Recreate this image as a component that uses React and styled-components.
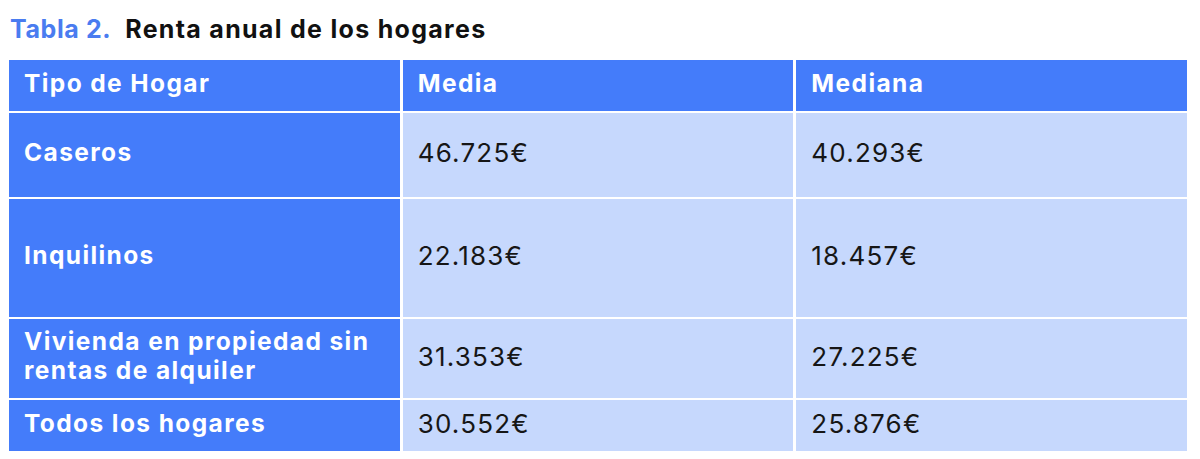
import React from "react";
import styled, { createGlobalStyle } from "styled-components";

const GlobalStyle = createGlobalStyle`
  html, body {
    margin: 0;
    padding: 0;
    background: #ffffff;
  }
  body {
    font-family: "Inter", "Open Sans", sans-serif;
  }
`;

const Page = styled.div`
  width: 1200px;
  height: 459px;
  padding: 13px 13px 0 9px;
  box-sizing: border-box;
`;

const Title = styled.h2`
  margin: 0 0 0 1px;
  height: 47px;
  font-size: 25px;
  font-weight: 700;
  color: #111111;
  letter-spacing: 1.3px;
  line-height: 32px;
  white-space: nowrap;
`;

const TitleNum = styled.span`
  color: #4a7cf0;
  margin-right: 14px;
  letter-spacing: 0.6px;
`;

const Grid = styled.div`
  display: grid;
  grid-template-columns: repeat(3, 1fr);
  column-gap: 3px;
  row-gap: 2px;
  width: 1178px;
`;

const Cell = styled.div`
  height: ${({ $h }) => $h}px;
  box-sizing: border-box;
  display: flex;
  align-items: center;
  padding: 0 12px 5px 15px;
  background: ${({ $light }) => ($light ? "#c6d8fd" : "#447cfa")};
  color: ${({ $light }) => ($light ? "#161616" : "#ffffff")};
  font-size: ${({ $light }) => ($light ? 26 : 24.5)}px;
  font-weight: ${({ $light }) => ($light ? 400 : 700)};
  line-height: 29px;
  letter-spacing: ${({ $light }) => ($light ? "1.2px" : "1.4px")};
`;

const header = ["Tipo de Hogar", "Media", "Mediana"];

const rows = [
  { label: "Caseros", media: "46.725€", mediana: "40.293€", h: 84 },
  { label: "Inquilinos", media: "22.183€", mediana: "18.457€", h: 118 },
  {
    label: "Vivienda en propiedad sin rentas de alquiler",
    media: "31.353€",
    mediana: "27.225€",
    h: 79,
  },
  { label: "Todos los hogares", media: "30.552€", mediana: "25.876€", h: 51 },
];

export default function App() {
  return (
    <Page>
      <GlobalStyle />
      <Title>
        <TitleNum>Tabla 2.</TitleNum>Renta anual de los hogares
      </Title>
      <Grid>
        {header.map((h) => (
          <Cell key={h} $h={51}>
            {h}
          </Cell>
        ))}
        {rows.map((r) => (
          <React.Fragment key={r.label}>
            <Cell $h={r.h}>{r.label}</Cell>
            <Cell $h={r.h} $light>
              {r.media}
            </Cell>
            <Cell $h={r.h} $light>
              {r.mediana}
            </Cell>
          </React.Fragment>
        ))}
      </Grid>
    </Page>
  );
}
